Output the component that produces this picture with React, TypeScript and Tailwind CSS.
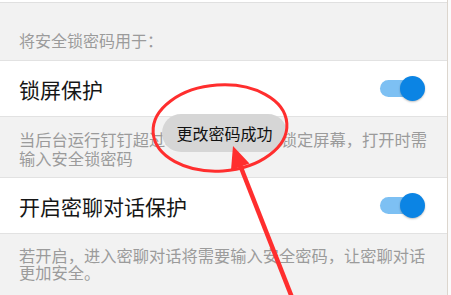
import React from 'react';

function Toggle() {
  return (
    <div className="relative h-[25px] w-[45px] shrink-0">
      <div className="absolute left-0 top-[4px] h-[17px] w-[40px] rounded-full bg-[#7dc0f3]" />
      <div className="absolute right-0 top-0 h-[25px] w-[25px] rounded-full bg-[#0b84e4] shadow-[0_1px_2px_rgba(0,0,0,0.25)]" />
    </div>
  );
}

function SettingRow({ title }: { title: string }) {
  return (
    <div className="flex h-[57px] items-center justify-between border-y border-[#e2e2e2] bg-white pl-[19px] pr-[22px]">
      <span className="text-[21px] leading-[26px] text-[#161616]">{title}</span>
      <Toggle />
    </div>
  );
}

export default function App() {
  return (
    <div className="relative h-[295px] w-[451px] overflow-hidden bg-[#fbfbfb] font-['Noto_Sans_CJK_SC','Noto_Sans',sans-serif]">
      <div className="w-[448px] border-r border-[#dcd6ce] bg-white pt-[2px]">
        {/* Section header */}
        <div className="border-t border-[#e0e0e0] bg-[#f2f2f2] pb-[9px] pl-[19px] pt-[26px] text-[16px] leading-[22px] text-[#9b9b9b]">
          将安全锁密码用于：
        </div>

        <SettingRow title="锁屏保护" />

        <div className="h-[60px] whitespace-nowrap bg-[#f2f2f2] pl-[19px] pt-[13px] text-[16.25px] leading-[19px] text-[#9b9b9b]">
          当后台运行钉钉超过30分钟，钉钉将锁定屏幕，打开时需
          <br />
          输入安全锁密码
        </div>

        <SettingRow title="开启密聊对话保护" />

        <div className="h-[70px] whitespace-nowrap bg-[#f2f2f2] pl-[19px] pt-[13px] text-[16.25px] leading-[17px] text-[#9b9b9b]">
          若开启，进入密聊对话将需要输入安全密码，让密聊对话
          <br />
          更加安全。
        </div>
      </div>

      {/* Toast */}
      <div className="absolute left-[162px] top-[114px] flex h-[38px] w-[125px] items-center justify-center rounded-full bg-[#d6d6d6] text-[16px] text-[#111]">
        更改密码成功
      </div>

      {/* Annotation */}
      <svg
        className="pointer-events-none absolute left-0 top-0"
        width="451"
        height="295"
        viewBox="0 0 451 295"
      >
        <ellipse
          cx="220"
          cy="128"
          rx="67"
          ry="43"
          transform="rotate(-4 220 128)"
          fill="none"
          stroke="#ff2e2e"
          strokeWidth="3"
        />
        <line x1="240" y1="165" x2="293" y2="300" stroke="#ff2e2e" strokeWidth="4.5" />
        <polygon points="233,146 249.5,163.5 231,170" fill="#ff2e2e" />
      </svg>
    </div>
  );
}
